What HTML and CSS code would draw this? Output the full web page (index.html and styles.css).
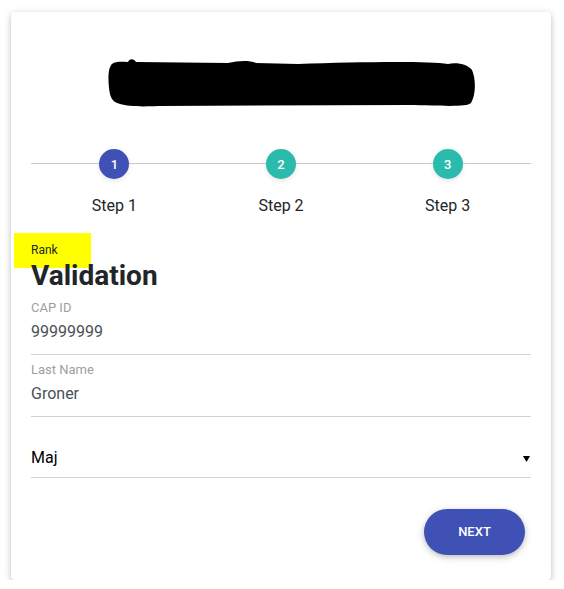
FILE: index.html
```html
<!DOCTYPE html>
<html lang="en">
<head>
<meta charset="utf-8">
<title>Validation</title>
<link rel="stylesheet" href="styles.css">
</head>
<body>
<div class="card">
  <div class="logo">
    <svg width="368" height="50" viewBox="0 0 368 50">
      <path d="M4 6 C8 3 14 4 20 4 C22 0 26 1 28 4 L120 5 C130 3 140 2 148 5 L190 6 C250 4 320 3 340 6 C350 4 360 7 364 12 C368 21 368 37 363 45 C358 49 340 48 300 47 L50 48 C30 49 20 48 12 46 C4 44 2 39 1 30 C0 20 0 10 4 6 Z" fill="#000"/>
    </svg>
  </div>

  <div class="stepper">
    <div class="step">
      <span class="dot dot-active">1</span>
      <span class="step-label">Step 1</span>
    </div>
    <div class="step">
      <span class="dot">2</span>
      <span class="step-label">Step 2</span>
    </div>
    <div class="step">
      <span class="dot">3</span>
      <span class="step-label">Step 3</span>
    </div>
  </div>

  <div class="rank">Rank</div>
  <h1 class="title">Validation</h1>

  <div class="field">
    <div class="field-label">CAP ID</div>
    <div class="field-value">99999999</div>
  </div>
  <div class="field">
    <div class="field-label">Last Name</div>
    <div class="field-value">Groner</div>
  </div>
  <div class="select">
    <span class="select-value">Maj</span>
    <svg class="caret" width="7" height="6" viewBox="0 0 7 6"><path d="M0 0 H7 L3.5 6 Z" fill="#000"/></svg>
  </div>

  <div class="actions">
    <button class="btn">NEXT</button>
  </div>
</div>
</body>
</html>
```
FILE: styles.css
```css
* { box-sizing: border-box; }
html, body { margin: 0; padding: 0; background: #fff; }
body {
  font-family: Roboto, "Liberation Sans", sans-serif;
  padding: 12px 0 0 11px;
}
.card {
  width: 540px;
  background: #fff;
  border-radius: 4px;
  box-shadow: 0 2px 5px 0 rgba(0,0,0,.16), 0 2px 10px 0 rgba(0,0,0,.12);
  padding: 46px 20px 25px 20px;
}
.logo { margin-left: 77px; height: 50px; }
.logo svg { display: block; }

.stepper {
  position: relative;
  display: grid;
  grid-template-columns: repeat(3, 1fr);
  margin-top: 41px;
}
.stepper::before {
  content: "";
  position: absolute;
  left: 0; right: 0;
  top: 14px;
  height: 1px;
  background: #c9c9c9;
}
.step {
  position: relative;
  display: flex;
  flex-direction: column;
  align-items: center;
}
.dot {
  width: 30px; height: 30px;
  border-radius: 50%;
  background: #2bbbad;
  color: #fff;
  font-size: 13px;
  font-weight: 500;
  display: flex;
  align-items: center;
  justify-content: center;
  box-shadow: 0 2px 5px 0 rgba(0,0,0,.10);
}
.dot-active { background: #3f51b5; }
.step-label {
  margin-top: 15px;
  font-size: 16px;
  line-height: 24px;
  color: #212529;
}

.rank {
  width: 77px;
  height: 35px;
  margin: 15px 0 -9px -17px;
  padding: 9px 0 0 17px;
  background: #ffff00;
  font-size: 12px;
  line-height: 16px;
  color: #212529;
}
.title {
  margin: 0;
  font-size: 28px;
  font-weight: 700;
  line-height: 33.6px;
  color: #212529;
}

.field {
  padding-top: 7px;
  padding-bottom: 10px;
  border-bottom: 1px solid #ced4da;
}
.field + .field { padding-top: 7.5px; }
.field-label {
  font-size: 13px;
  line-height: 16px;
  color: #9e9e9e;
}
.field-value {
  margin-top: 4px;
  font-size: 16px;
  line-height: 24px;
  color: #495057;
}

.select {
  display: flex;
  align-items: center;
  justify-content: space-between;
  margin-top: 29px;
  padding-bottom: 7px;
  border-bottom: 1px solid #ced4da;
}
.select-value {
  font-size: 16px;
  line-height: 24px;
  color: #000;
}
.caret { margin-right: 1px; margin-top: 1px; }

.actions {
  display: flex;
  justify-content: flex-end;
  margin-top: 31px;
  padding-right: 6px;
}
.btn {
  border: 0;
  border-radius: 10em;
  background: #3f51b5;
  color: #fff;
  font-family: Roboto, "Liberation Sans", sans-serif;
  font-size: 13px;
  font-weight: 500;
  line-height: 18px;
  padding: 14px 34px;
  width: 101px;
  box-shadow: 0 2px 5px 0 rgba(0,0,0,.16), 0 2px 10px 0 rgba(0,0,0,.12);
}
```
